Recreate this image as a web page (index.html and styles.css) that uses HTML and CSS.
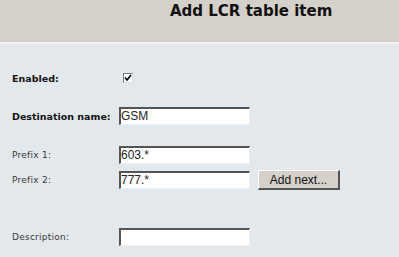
FILE: index.html
```html
<!DOCTYPE html>
<html>
<head>
<meta charset="utf-8">
<link rel="stylesheet" href="styles.css">
</head>
<body>
<div class="header"><h1 class="title">Add LCR table item</h1></div>
<div class="content">
  <div class="row row-enabled">
    <span class="label bold">Enabled:</span>
    <span class="check"><svg width="8" height="8" viewBox="0 0 8 8"><path d="M1 3.5 L3 6 L7 1" fill="none" stroke="#000" stroke-width="1.6"/></svg></span>
  </div>
  <div class="row row-dest">
    <span class="label bold">Destination name:</span>
    <span class="input">GSM</span>
  </div>
  <div class="row row-p1">
    <span class="label">Prefix 1:</span>
    <span class="input">603.*</span>
  </div>
  <div class="row row-p2">
    <span class="label">Prefix 2:</span>
    <span class="input">777.*</span>
    <span class="button">Add next...</span>
  </div>
  <div class="row row-desc">
    <span class="label">Description:</span>
    <span class="input"></span>
  </div>
</div>
</body>
</html>
```

FILE: styles.css
```css
html, body {
  margin: 0;
  padding: 0;
}
body {
  width: 399px;
  height: 257px;
  overflow: hidden;
  background: #e2e8eb;
  font-family: "DejaVu Sans", Verdana, sans-serif;
}
.header {
  height: 42px;
  background: #d5d0c9;
  border-bottom: 2px solid #f2f4f5;
  display: flex;
  align-items: flex-start;
}
.title {
  margin: 3px 0 0 170px;
  font-size: 15px;
  font-weight: bold;
  color: #111;
  line-height: 17px;
}
.content {
  display: flex;
  flex-direction: column;
  padding-left: 12px;
}
.row {
  display: flex;
  align-items: center;
}
.label {
  width: 107px;
  font-size: 9px;
  color: #3a3a3a;
  letter-spacing: 0.25px;
}
.bold {
  font-weight: bold;
  color: #111;
  font-size: 9.5px;
  letter-spacing: 0;
}
.row-enabled { margin-top: 24px; height: 20px; }
.row-dest { margin-top: 19px; height: 18px; }
.row-p1 { margin-top: 21px; height: 18px; }
.row-p2 { margin-top: 6px; height: 20px; }
.row-desc { margin-top: 38px; height: 18px; }
.check {
  margin-left: 4px;
  width: 8px;
  height: 8px;
  background: #fff;
  border-top: 1px solid #777;
  border-left: 1px solid #777;
  border-right: 1px solid #ddd;
  border-bottom: 1px solid #ddd;
  display: flex;
  align-items: center;
  justify-content: center;
}
.input {
  box-sizing: border-box;
  width: 131px;
  height: 18px;
  background: #fff;
  border-top: 2px solid #555;
  border-left: 2px solid #555;
  border-right: 1px solid #eef0f0;
  border-bottom: 1px solid #eef0f0;
  font-family: "Liberation Sans", Arial, sans-serif;
  font-size: 12px;
  line-height: 14px;
  color: #222;
  padding-left: 0;
}
.button {
  box-sizing: border-box;
  margin-left: 8px;
  width: 82px;
  height: 20px;
  background: #d5d0c9;
  border-top: 1px solid #fff;
  border-left: 1px solid #fff;
  border-right: 2px solid #555;
  border-bottom: 2px solid #555;
  font-family: "Liberation Sans", Arial, sans-serif;
  font-size: 12px;
  color: #111;
  display: flex;
  align-items: center;
  justify-content: center;
}
```
